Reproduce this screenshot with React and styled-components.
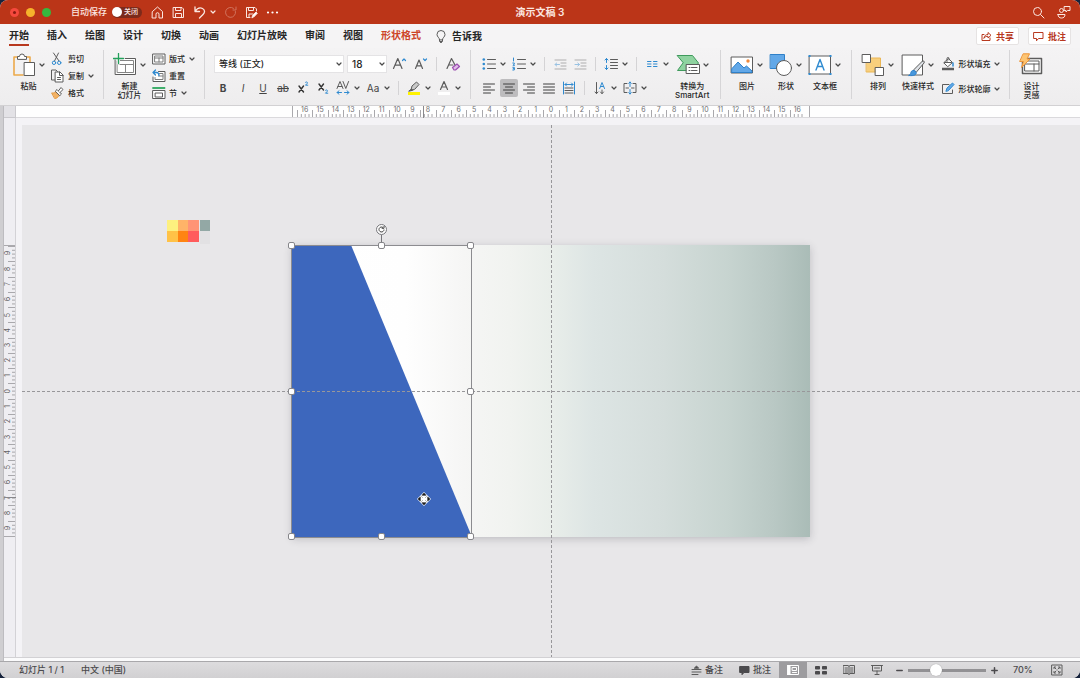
import { useState } from 'react';
import styled, { createGlobalStyle, css } from 'styled-components';

const colors = {
  brand: '#bb3518',
  ink: '#262626',
  line: '#5c5c5c',
  blue: '#2f8ad0',
  paleBlue: '#62a8e8',
  canvas: '#e8e7e9',
  shape: '#3d67bd',
};

const GlobalStyle = createGlobalStyle`
  * { box-sizing: border-box; }
  html, body, #root { height: 100%; }
  body {
    margin: 0;
    background: #17233c;
    font-family: Inter, 'Noto Sans CJK SC', sans-serif;
    color: ${colors.ink};
    overflow: hidden;
  }
  button, select { font: inherit; color: inherit; }
`;

const Window = styled.div`
  height: 100%;
  display: flex;
  flex-direction: column;
  overflow: hidden;
  border-radius: 8px;
  background: #f3f2f3;
`;

const plainButton = css`
  border: 0;
  padding: 0;
  margin: 0;
  background: none;
  cursor: default;
`;

/* ---------- title bar ---------- */

const TitleBar = styled.header`
  flex: none;
  height: 24px;
  display: grid;
  grid-template-columns: 1fr auto 1fr;
  align-items: center;
  background: ${colors.brand};
  color: #fbe6e0;
`;

const TitleLeft = styled.div`
  display: flex;
  align-items: center;
  padding-left: 10px;
`;

const Lights = styled.div`
  display: flex;
  gap: 7px;
  margin-right: 20px;
`;

const Light = styled.button`
  ${plainButton}
  width: 9px;
  height: 9px;
  border-radius: 50%;
  background: ${props => props.$color};
  display: grid;
  place-items: center;

  &::after {
    content: '';
    width: 3px;
    height: 3px;
    border-radius: 50%;
    background: ${props => props.$dot || 'transparent'};
  }
`;

const AutoSave = styled.label`
  display: flex;
  align-items: center;
  gap: 5px;
  font-size: 9px;
  line-height: 12px;
  font-weight: 500;
  white-space: nowrap;
`;

const HiddenCheck = styled.input`
  position: absolute;
  opacity: 0;
  width: 1px;
  height: 1px;
`;

const Switch = styled.span`
  display: flex;
  align-items: center;
  gap: 2px;
  width: 30px;
  height: 11px;
  border-radius: 6px;
  background: #7d2a1b;
  font-size: 7px;
  line-height: 10px;

  &::before {
    content: '';
    width: 10px;
    height: 10px;
    border-radius: 50%;
    background: #fff;
  }
`;

const QuickBar = styled.div`
  display: flex;
  align-items: center;
  gap: 7px;
  margin-left: 8px;
`;

const QuickButton = styled.button`
  ${plainButton}
  width: ${props => (props.$narrow ? '8px' : '14px')};
  margin: ${props => (props.$narrow ? '0 -1px 0 -4px' : '0')};
  height: 16px;
  display: grid;
  place-items: center;
  opacity: ${props => (props.disabled ? 0.35 : 1)};
`;

const DocTitle = styled.h1`
  margin: 0;
  font-size: 10px;
  line-height: 14px;
  font-weight: 600;
`;

const TitleRight = styled.div`
  display: flex;
  justify-content: flex-end;
  gap: 12px;
  padding-right: 9px;
`;

/* ---------- tabs ---------- */

const TabRow = styled.nav`
  flex: none;
  height: 24px;
  display: flex;
  align-items: center;
  padding: 0 9px;
  background: #f5f4f5;
`;

const Tabs = styled.div`
  display: flex;
  gap: 18px;
`;

const Tab = styled.button`
  ${plainButton}
  height: 20px;
  font-size: 10px;
  line-height: 16px;
  font-weight: 600;
  white-space: nowrap;
  color: ${props => (props.$accent ? '#cd4528' : colors.ink)};
  border-bottom: 2px solid ${props => (props.$active ? '#b8391f' : 'transparent')};
`;

const TellMe = styled.button`
  ${plainButton}
  display: flex;
  align-items: center;
  gap: 6px;
  margin-left: 15px;
  font-size: 10px;
  line-height: 16px;
  font-weight: 600;
`;

const TabActions = styled.div`
  display: flex;
  gap: 9px;
  margin-left: auto;
`;

const ActionButton = styled.button`
  ${plainButton}
  display: flex;
  align-items: center;
  justify-content: center;
  gap: 4px;
  width: 43px;
  height: 18px;
  border: 1px solid #e6e3e3;
  border-radius: 2px;
  background: #fff;
  color: #b8391f;
  font-size: 9px;
  font-weight: 600;
  white-space: nowrap;
`;

/* ---------- ribbon ---------- */

const Ribbon = styled.div`
  flex: none;
  height: 58px;
  display: flex;
  padding: 2px 3px 0;
  background: linear-gradient(#f4f3f4, #eeedee);
  border-bottom: 1px solid #d2d1d3;
`;

const Group = styled.div`
  position: relative;
  flex: none;
  display: flex;
  align-items: flex-start;
  gap: ${props => props.$gap || 6}px;
  height: 49px;
  padding: 0 ${props => props.$end || 9}px 0 9px;
  border-right: 1px solid ${props => (props.$last ? 'transparent' : '#d6d5d7')};
`;

const BigButton = styled.button`
  ${plainButton}
  min-width: ${props => (props.$plain ? '24px' : '33px')};
  padding-top: 3px;
  display: flex;
  flex-direction: column;
  align-items: center;
  gap: 5px;
  font-size: 8px;
  line-height: 9px;
  font-weight: 500;
  white-space: pre;
  text-align: center;
`;

const BigIcon = styled.span`
  display: flex;
  align-items: center;
  gap: 3px;
  height: 24px;
`;

const SmallColumn = styled.div`
  display: flex;
  flex-direction: column;
`;

const SmallButton = styled.button`
  ${plainButton}
  height: 17px;
  display: flex;
  align-items: center;
  font-size: 8px;
  line-height: 12px;
  font-weight: 500;
  white-space: nowrap;
`;

const SmallLabel = styled.span`
  margin: 0 4px 0 3px;
  text-align: left;
`;

const ToolStack = styled.div`
  display: flex;
  flex-direction: column;
  gap: ${props => (props.$loose ? '8px' : '6px')};
  padding-top: 5px;
`;

const ToolRow = styled.div`
  display: flex;
  align-items: center;
  gap: ${props => props.$gap || 2}px;
  height: 18px;
`;

const ToolButton = styled.button`
  ${plainButton}
  width: 18px;
  height: 18px;
  display: grid;
  place-items: center;
  border-radius: 2px;
  font-size: 10px;
  line-height: 14px;
  background: ${props => (props.$active ? '#bdbcbe' : 'transparent')};
  opacity: ${props => (props.disabled ? 0.45 : 1)};
  color: #444;
`;

const SplitButton = styled.button`
  ${plainButton}
  width: 28px;
  height: 18px;
  display: grid;
  grid-template-columns: 18px 10px;
  place-items: center;
  font-size: 10px;
  line-height: 14px;
  color: #444;
`;

const Separator = styled.span`
  width: 9px;
  height: 14px;
  background: linear-gradient(#d4d3d5, #d4d3d5) center / 1px 100% no-repeat;
`;

const SelectBox = styled.div`
  display: grid;
  grid-template-columns: 1fr 10px;
  align-items: center;
  width: ${props => (props.$wide ? '130px' : '40px')};
  height: 18px;
  background: #fff;
  border: 1px solid #e4e3e5;

  & > select {
    grid-area: 1 / 1 / 2 / 3;
    appearance: none;
    border: 0;
    outline: 0;
    background: transparent;
    padding: 0 4px;
    font-size: ${props => (props.$wide ? '9px' : '10px')};
    line-height: 14px;
    font-weight: 500;
  }

  & > svg {
    grid-area: 1 / 2 / 2 / 3;
    justify-self: end;
    margin-right: 1px;
    pointer-events: none;
  }
`;

/* ---------- work area ---------- */

const Workspace = styled.main`
  flex: 1;
  min-height: 0;
  display: grid;
  grid-template-columns: 4px 12px 6px 1fr;
  grid-template-rows: 12px 7px 1fr 4px;
  background: #f4f3f6;
`;

const EdgeStrip = styled.div`
  grid-area: 1 / 1 / 5 / 2;
  background: #cfced1;
  border-right: 1px solid #bdbcc0;
`;

const RulerCorner = styled.div`
  grid-area: 1 / 2 / 2 / 3;
  background: #e3e2e6;
  border: solid #cac9cd;
  border-width: 0 1px 1px 0;
`;

const RulerTop = styled.div`
  grid-area: 1 / 3 / 2 / 5;
  display: flex;
  justify-content: center;
  padding-left: 6px;
  background: #fefefe;
  border-bottom: 1px solid #dad9dc;
`;

const RulerLeft = styled.div`
  grid-area: 2 / 2 / 4 / 3;
  display: flex;
  flex-direction: column;
  justify-content: center;
  padding-top: 7px;
  background: #efeef2;
  border-right: 1px solid #d3d2d6;
`;

const TopScale = styled.div`
  position: relative;
  display: grid;
  grid-template-columns: repeat(33, 1fr);
  width: 518px;
  padding: 0 4px;
  border: solid #aaa9ad;
  border-width: 0 1px;
`;

const LeftScale = styled.div`
  position: relative;
  display: grid;
  grid-template-rows: repeat(19, 1fr);
  height: 292px;
  border: solid #aaa9ad;
  border-width: 1px 0;
`;

const TopCell = styled.span`
  display: flex;
  flex-direction: column;
  align-items: center;
  font-size: 7px;
  line-height: 7px;
  color: #6f6e72;

  & > svg {
    width: 100%;
    height: 7px;
    margin-top: -3px;
  }
`;

const LeftCell = styled.span`
  display: flex;
  align-items: center;
  justify-content: space-between;
  font-size: 7px;
  line-height: 7px;
  color: #5f5e62;
  min-height: 0;

  & > span {
    writing-mode: vertical-rl;
    transform: rotate(180deg);
  }

  & > svg {
    width: 7px;
    height: 100%;
    margin-left: -3px;
  }
`;

const TopMarker = styled.i`
  position: absolute;
  left: 130px;
  top: 0;
  width: 1px;
  height: 12px;
  background: #88878b;
`;

const LeftMarker = styled.i`
  position: absolute;
  top: 251px;
  left: 0;
  width: 12px;
  height: 1px;
  background: #88878b;
`;

const Canvas = styled.section`
  grid-area: 3 / 4 / 4 / 5;
  position: relative;
  display: grid;
  place-items: center;
  overflow: hidden;
  background: ${colors.canvas};
`;

const CanvasFoot = styled.div`
  grid-area: 4 / 2 / 5 / 5;
  background: #fbfbfc;
  border-top: 1px solid #d2d1d4;
`;

const Slide = styled.div`
  position: relative;
  width: 518px;
  height: 292px;
  box-shadow: 0 2px 8px rgba(60, 60, 70, 0.24);
  background: linear-gradient(
    90deg,
    #fff 0%,
    #fefefe 22%,
    #f6f6f5 33%,
    #f1f3f0 42%,
    #e9eeea 50%,
    #dde5e4 58%,
    #d4dddb 72%,
    #c7d4d0 84%,
    #b9c8c4 93%,
    #aabcb7 100%
  );
`;

const GuideH = styled.i`
  position: absolute;
  left: 0;
  right: 0;
  top: 50%;
  height: 1px;
  background: repeating-linear-gradient(90deg, #98979a 0 3px, transparent 3px 5px);
`;

const GuideV = styled.i`
  position: absolute;
  top: 0;
  bottom: 0;
  left: 50%;
  width: 1px;
  background: repeating-linear-gradient(180deg, #98979a 0 3px, transparent 3px 5px);
`;

const ShapeLayer = styled.svg`
  display: block;
  position: absolute;
  left: 0;
  top: 0;
`;

const Selection = styled.div`
  position: absolute;
  left: calc(50% - 260px);
  top: calc(50% - 146px);
  width: 181px;
  height: 293px;
  border: 1px solid #8c8c90;
`;

const Handle = styled.i`
  position: absolute;
  left: ${props => props.$x}%;
  top: ${props => props.$y}%;
  width: 7px;
  height: 7px;
  margin: -4px;
  border: 1px solid #86868a;
  border-radius: 2px;
  background: #fff;
`;

const RotateHandle = styled.div`
  position: absolute;
  left: 50%;
  top: -22px;
  width: 11px;
  height: 22px;
  margin-left: -6px;
`;

const Pointer = styled.svg`
  position: absolute;
  left: calc(50% - 134px);
  top: calc(50% + 101px);
`;

const Palette = styled.div`
  position: absolute;
  left: calc(50% - 384px);
  top: calc(50% - 171px);
  display: flex;
  gap: 1px;
`;

const Warm = styled.div`
  display: grid;
  grid-template-columns: 11px 10px 11px;
  grid-auto-rows: 11px;
`;

const Cool = styled.div`
  display: grid;
  grid-template-columns: 10px;
  grid-template-rows: 11px 13px;
`;

const Swatch = styled.span`
  background: ${props => props.$color};
`;

/* ---------- status bar ---------- */

const StatusBar = styled.footer`
  flex: none;
  height: 17px;
  display: flex;
  align-items: center;
  padding: 0 17px 0 19px;
  background: linear-gradient(#dddcde, #d1d0d2);
  border-top: 1px solid #a9a8ab;
  color: #4b4a4d;
  font-size: 9px;
  line-height: 14px;
  font-weight: 500;
  white-space: nowrap;
`;

const StatusLeft = styled.div`
  display: flex;
  gap: 17px;
`;

const StatusRight = styled.div`
  display: flex;
  align-items: center;
  margin-left: auto;
`;

const StatusButton = styled.button`
  ${plainButton}
  display: flex;
  align-items: center;
  gap: 3px;
  margin-right: ${props => (props.$last ? '8px' : '16px')};
`;

const ViewButton = styled.button`
  ${plainButton}
  width: 28px;
  height: 16px;
  display: grid;
  place-items: center;
  background: ${props => (props.$active ? '#9d9c9f' : 'transparent')};
`;

const ZoomControl = styled.div`
  display: flex;
  align-items: center;
  gap: 5px;
  margin-left: 5px;
`;

const ZoomRange = styled.input`
  appearance: none;
  width: 78px;
  height: 12px;
  margin: 0;
  background: linear-gradient(#929194, #929194) center / 100% 3px no-repeat;

  &::-webkit-slider-thumb {
    appearance: none;
    width: 12px;
    height: 12px;
    border-radius: 50%;
    background: #fff;
    box-shadow: 0 0 1px rgba(0, 0, 0, 0.4);
  }
`;

const ZoomValue = styled.output`
  width: 38px;
  margin-left: 15px;
`;

/* ---------- icons ---------- */

const Icon = ({ w = 14, h = w, children, stroke = colors.line, sw = 1 }) => (
  <svg
    width={w}
    height={h}
    viewBox={`0 0 ${w} ${h}`}
    fill="none"
    stroke={stroke}
    strokeWidth={sw}
    strokeLinecap="round"
    strokeLinejoin="round"
    aria-hidden="true"
  >
    {children}
  </svg>
);

const Chevron = ({ color = '#4a4a4a' }) => (
  <Icon w={6} stroke={color} sw={1.2}><path d="M1 2l2 2 2-2" /></Icon>
);

const HomeIcon = () => (
  <Icon w={13} stroke="#fbe6e0">
    <path d="M1.500 5.500L6.500 1l5 4.500V12H8V8.200a1.500 1.500 0 0 0-3 0V12H1.500z" />
  </Icon>
);

const SaveIcon = ({ edit }) => (
  <Icon w={13} stroke="#fbe6e0">
    {edit
      ? <>
        <path d="M5 11.500H1.500v-10H10l1.500 1.500v2M3.500 1.500v3h5v-3M4 11.500V8h4" />
        <path d="M7 11.500l.6-2L11 6l1.300 1.300L8.900 10.800z" fill="#fff" />
      </>
      : <path d="M1.500 1.500h8.500l1.500 1.500v8.500h-10zM3.500 1.500v3h5.500v-3M3.500 11.500V7.500h6v4" />}
  </Icon>
);

const UndoIcon = () => (
  <Icon w={13} stroke="#fbe6e0" sw={1.3}>
    <path d="M2 1v4.500h4.500M2 5.500C4 2.500 7 1.200 9.500 2.500c2.700 1.500 2.500 4 .5 6L6.500 12" />
  </Icon>
);

const RedoIcon = () => (
  <Icon w={13} stroke="#fbe6e0">
    <path d="M11.500 5.500a5 5 0 1 1-2-3.200M12 1v3H9" />
  </Icon>
);

const DotsIcon = () => (
  <Icon w={13} stroke="none">
    {[2, 6.5, 11].map(x => <circle key={x} cx={x} cy="6.500" r="1.100" fill="#fff" />)}
  </Icon>
);

const SearchIcon = () => (
  <Icon w={13} stroke="#fbe6e0"><circle cx="5.500" cy="5.500" r="4" /><path d="M8.500 8.500l3.500 3.500" /></Icon>
);

const PresenceIcon = () => (
  <Icon w={14} stroke="#fbe6e0">
    <circle cx="4.500" cy="5.500" r="2" />
    <path d="M1 9.500h7c0 2.500-1.500 3.500-3.500 3.500S1 12 1 9.500zM7.500 1.500H13v4h-2.500L9 7V5.500H7.500z" />
  </Icon>
);

const BulbIcon = () => (
  <Icon w={10} h={13}>
    <path d="M3.500 9.500C3.500 7.500 1 7 1 4.500a4 4 0 0 1 8 0c0 2.500-2.500 3-2.500 5zM3.500 9.500v2h3v-2M4.500 12.500h1" />
  </Icon>
);

const ShareIcon = () => (
  <Icon w={11} stroke="#b8391f">
    <path d="M3 3.500H1v6h8V7M3 7c.3-2.500 2-3.500 4-3.500V1.500L10 4.300 7 7V5.300C5.500 5.300 4 5.500 3 7z" />
  </Icon>
);

const CommentIcon = () => (
  <Icon w={11} stroke="#b8391f"><path d="M1 1.500h9v6H5.500L3.500 9.800V7.500H1z" /></Icon>
);

const PasteIcon = () => (
  <Icon w={24}>
    <path d="M6 4H2v18h9M14 4h4v5" stroke="#eca94a" strokeWidth="1.600" />
    <path d="M5.500 6V3.500h2a2.500 2.500 0 0 1 5 0h2V6z" fill="#fff" />
    <path d="M12.500 9.500h10v13h-10z" fill="#fff" />
  </Icon>
);

const CutIcon = () => (
  <Icon w={14}>
    <path d="M2.500 1l5.500 8M7.500 1L3.500 9" />
    <circle cx="3" cy="10.800" r="1.700" stroke={colors.blue} />
    <circle cx="8.200" cy="10.800" r="1.700" stroke={colors.blue} />
  </Icon>
);

const CopyIcon = () => (
  <Icon w={14}>
    <path d="M4 11H.5V1H5l1.500 1.500" />
    <path d="M4.500 3h4.500l3 3v7H4.500z" fill="#fff" />
    <path d="M8.500 3v3.500H12M6.500 8.500h3M6.500 10.500h3" />
  </Icon>
);

const BrushIcon = () => (
  <Icon w={14}>
    <path d="M1 7c2 .3 3-.5 4-1.500l3.500 3.500C7 11.500 5.500 12.500 4 12.500z" fill="#f3b265" stroke="#e39a45" />
    <path d="M4.500 5l1.500-1.500 4.500 4.500L9 9.500z" fill="#fff" />
    <path d="M7.500 4.800L10 1.500l2 2L9 6.500" fill="#fff" />
  </Icon>
);

const NewSlideIcon = () => (
  <Icon w={24}>
    <path d="M2.500 5.500h20v16h-20z" fill="#fff" />
    <path d="M4.500 7.500h16v12h-16zM4.500 11.500h16M12.500 11.500v8" stroke="#858585" />
    <path d="M5.500 .5v10M.5 5h10" stroke="#f3f2f3" strokeWidth="3" />
    <path d="M5.500 .5v10M.5 5.500h10" stroke="#22a05a" strokeWidth="1.300" />
  </Icon>
);

const LayoutIcon = () => (
  <Icon w={14}>
    <path d="M1 2h12v10H1z" fill="#fff" />
    <path d="M3 4h8v6H3zM3 6h8M7 6v4" stroke="#7c7c7c" />
  </Icon>
);

const ResetIcon = () => (
  <Icon w={14}>
    <path d="M6.500 2.500h6.500v10H1V8" fill="#fff" />
    <path d="M7.500 4.500h3.500v6H3V8.500M6.500 7H11" stroke="#7c7c7c" />
    <path d="M3.500 1L1 3.500 3.500 6M1 3.500h3.500c2 0 2.500 1.500 2.500 3" stroke={colors.blue} strokeWidth="1.300" />
  </Icon>
);

const SectionIcon = () => (
  <Icon w={14}>
    <path d="M1 1.500h12v1H1z" stroke="#3fae6c" />
    <path d="M1 4.500h12v8H1z" fill="#fff" />
    <path d="M3.500 7h7v4h-7z" />
  </Icon>
);

const GrowIcon = ({ shrink }) => (
  <Icon w={16} sw={1.2}>
    {shrink
      ? <path d="M3.500 12.500L7 4l3.500 8.500M4.800 9.800h4.400" />
      : <path d="M2.500 12.500l4.300-10 4.200 10M4 9.200h5.500" />}
    <path d={shrink ? 'M11.500 3L13 4.500 14.500 3' : 'M11.500 4.500L13 3l1.500 1.500'} stroke={colors.blue} />
  </Icon>
);

const ClearFormatIcon = () => (
  <Icon w={16} sw={1.2}>
    <path d="M2 12.500L6.500 2.500 10 9M3.700 9H8" />
    <path d="M7.500 11.500L12 8l2.500 2.500L10.500 14H9z" fill="#e2bdea" stroke="#9b4fb0" />
  </Icon>
);

const ScriptIcon = ({ up }) => (
  <Icon w={16}>
    <path d={up ? 'M4 6l4.500 6M8.500 6L4 12' : 'M4 4l4.500 6M8.500 4L4 10'} stroke="#333" strokeWidth="1.400" />
    <path
      d={up ? 'M10.500 2.300c1-1 2.500 0 1.800 1L10.500 5.200h2.300' : 'M10.500 10.300c1-1 2.500 0 1.800 1l-1.800 1.900h2.300'}
      stroke={colors.blue}
    />
  </Icon>
);

const SpacingIcon = () => (
  <Icon w={16}>
    <path d="M2 8.500L5 1.500 8 8.500M3 6.500h4M8 1.500l2.800 7 2.800-7" />
    <path d="M2 12.500h4.500M4 10.800l-2 1.700 2 1.700M14 12.500H9.500M12 10.800l2 1.700-2 1.700" stroke={colors.blue} />
  </Icon>
);

const HighlightIcon = () => (
  <Icon w={16}>
    <path d="M2 13.500h12" stroke="#fff200" strokeWidth="3" strokeLinecap="butt" />
    <path d="M5 10l1-4 4.500-4 2.500 2.500-4 4.500z" fill="#c9c9c9" />
    <path d="M3 11l2.500-2 1 1z" fill="#555" />
  </Icon>
);

const FontColorIcon = () => (
  <Icon w={16} sw={1.2}>
    <path d="M4.500 9.500L8 1.500l3.500 8M5.700 7h4.600" />
    <path d="M2 13.500h12" stroke="#fff" strokeWidth="3" strokeLinecap="butt" />
  </Icon>
);

const ListIcon = ({ numbered }) => (
  <Icon w={14}>
    <path d="M5.500 2.500h8M5.500 7h8M5.500 11.500h8" />
    {numbered
      ? <path d="M1.500 1v3M.8 6h1.500v1L1 8.300h1.500M.8 10.300h1.500v2.700H.8M1.200 11.600h1" stroke={colors.blue} />
      : [2.5, 7, 11.5].map(y => <circle key={y} cx="1.800" cy={y} r="1.300" fill={colors.blue} stroke="none" />)}
  </Icon>
);

const IndentIcon = ({ out }) => (
  <Icon w={13}>
    <path d="M1 2h11M7 5h5M7 8h5M1 11h11" />
    <path d={out ? 'M1 6.500h4.500M2.700 5L1 6.500 2.700 8' : 'M1 6.500h4.500M3.800 5l1.700 1.500L3.800 8'} stroke={colors.blue} />
  </Icon>
);

const LineSpaceIcon = () => (
  <Icon w={14}>
    <path d="M6.500 2.500h7M6.500 5.500h7M6.500 8.500h7M6.500 11.500h7" />
    <path d="M2.500 1.500v4M1 3l1.500-1.500L4 3M2.500 12.500v-4M1 11l1.500 1.500L4 11" stroke={colors.blue} />
  </Icon>
);

const ColumnsIcon = () => (
  <Icon w={12}><path d="M1.500 3.500h3.500M1.500 6h3.500M1.500 8.500h3.500M7.500 3.500H11M7.500 6H11M7.500 8.500H11" stroke={colors.blue} /></Icon>
);

const alignPaths = {
  left: 'M1.500 2h11M1.500 5h7M1.500 8h11M1.500 11h7',
  center: 'M1.500 2h11M3.500 5h7M1.500 8h11M3.500 11h7',
  right: 'M1.500 2h11M5.500 5h7M1.500 8h11M5.500 11h7',
  justify: 'M1.500 2h11M1.500 5h11M1.500 8h11M1.500 11h11',
};

const AlignIcon = ({ kind }) => <Icon w={14} h={13}><path d={alignPaths[kind]} stroke="#3f3f3f" /></Icon>;

const DistributeIcon = () => (
  <Icon w={14}>
    <path d="M1.500 1v12M12.500 1v12M3 3.500h8M4.500 2L3 3.500 4.500 5M9.500 2L11 3.500 9.500 5" stroke={colors.blue} />
    <path d="M3 7h8M3 9.500h8M3 12h8" />
  </Icon>
);

const TextDirectionIcon = () => (
  <Icon w={14}>
    <path d="M3.500 1.500v11M9 9v3.500M7.500 11L9 12.700 10.500 11M2 11l1.500 1.700L5 11" />
    <path d="M6.700 7.500L9 1.500l2.500 6M7.500 5.500h3" stroke={colors.blue} />
  </Icon>
);

const AlignTextIcon = () => (
  <Icon w={14}>
    <path d="M4 2.500H1v9h3M10 2.500h3v9h-3M3 7h2.500M8.500 7H11" />
    <path d="M7 1v4.500M5.700 2.300L7 1l1.300 1.300M7 13V8.500M5.700 11.700L7 13l1.300-1.300" stroke={colors.blue} />
  </Icon>
);

const SmartArtIcon = () => (
  <Icon w={24}>
    <path d="M1.500 2.500h15l6 7.500-6 7.500h-15L7 10z" fill="#8fd3a0" stroke="#3f9a5c" />
    <path d="M10.500 11.500h13v9h-13z" fill="#fff" />
    <path d="M13 14.500h1M15.500 14.500h5.500M13 17.500h1M15.500 17.500h5.500" />
  </Icon>
);

const PictureIcon = () => (
  <Icon w={24}>
    <path d="M1.500 4h21v16h-21z" fill="#fff" />
    <path d="M2 15.500l6-6.500 6 6 2.500-2 5.500 5v1.500H2z" fill={colors.paleBlue} stroke="#2f80c8" />
    <circle cx="18" cy="8" r="1.700" fill="#f08a3c" stroke="none" />
  </Icon>
);

const ShapesIcon = () => (
  <Icon w={24}>
    <path d="M1.500 1.500h14v14h-14z" fill={colors.paleBlue} stroke="#2f80c8" />
    <circle cx="15" cy="15" r="7.500" fill="#fff" />
  </Icon>
);

const TextBoxIcon = () => (
  <Icon w={24}>
    <path d="M1.500 3h21v18h-21z" fill="#fff" />
    <path d="M8 17l4-10.500L16 17M9.500 13.500h5" stroke={colors.blue} strokeWidth="1.400" />
    {[[1.5, 3], [22.5, 3], [1.5, 21], [22.5, 21]].map(([x, y]) => (
      <rect key={`${x}-${y}`} x={x - 1} y={y - 1} width="2" height="2" fill={colors.blue} stroke="none" />
    ))}
  </Icon>
);

const ArrangeIcon = () => (
  <Icon w={24}>
    <path d="M5.500 5h14v14h-14z" fill="#f8cf7c" stroke="#eab655" />
    <path d="M1.500 1.500h8v8h-8zM14.500 14.500h8v8h-8z" fill="#fff" />
  </Icon>
);

const QuickStyleIcon = () => (
  <Icon w={24}>
    <path d="M1.500 2h20v20h-20z" fill="#fff" />
    <path d="M12.500 17l8.500-8.500c1.500-1.300 3 0 2 1.500L15.500 19z" fill="#dfe3e8" />
    <path d="M8 22.500c2-.8 1.500-3 2.500-4.300 1.200-1.500 4-.8 4.700 1.300.5 2-2 3.700-7.200 3z" fill="#4797dd" stroke="#2f80c8" />
  </Icon>
);

const FillIcon = () => (
  <Icon w={14}>
    <path d="M1 12h12" strokeWidth="2.500" strokeLinecap="butt" />
    <path d="M3 5.500l4.500-4 4 4-4.500 4z" fill="#fff" />
    <path d="M6 4.500V1.500a1 1 0 0 1 2 0V3M3.500 5.500h7" />
    <path d="M12 6v3" stroke={colors.blue} strokeWidth="1.500" />
  </Icon>
);

const OutlineIcon = () => (
  <Icon w={14}>
    <path d="M8 2.500H1.500v9h10V8" />
    <path d="M5 9l1-3L11.500 1 13 2.500 7.500 8.500z" fill={colors.paleBlue} stroke={colors.blue} />
  </Icon>
);

const DesignIcon = () => (
  <Icon w={24}>
    <path d="M3.500 20.500v-15h19v15z" fill="#fff" strokeWidth="1.500" />
    <path d="M6 8h14v10H6zM6 11h14M15 11v7" />
    <path d="M4.500 .8h6L8 6h3L2.500 14.500 4.500 8.500H1z" fill="#fcc472" stroke="#ee9436" />
  </Icon>
);

const NotesIcon = () => (
  <Icon w={11}><path d="M1 4.500h9M1 7h9M1 9.500h6" /><path d="M3.500 3L5.500 1l2 2z" fill="#4b4a4d" /></Icon>
);

const CommentSolidIcon = () => (
  <Icon w={11}><path d="M1 1.500h9v6H5L3 9.700V7.500H1z" fill="#4b4a4d" stroke="#4b4a4d" /></Icon>
);

const NormalViewIcon = () => (
  <Icon w={12} stroke="#fff">
    <path d="M.5 1.500h11v9H.5z" /><path d="M1 1.500h2v9H1z" fill="#fff" /><path d="M5.500 3.500h4v3h-4zM5.500 8.500h4" />
  </Icon>
);

const GridViewIcon = () => (
  <Icon w={12} stroke="none">
    {[[0, 2], [7, 2], [0, 7], [7, 7]].map(([x, y]) => (
      <rect key={`${x}-${y}`} x={x} y={y} width="5" height="3.500" rx=".8" fill="#4b4a4d" />
    ))}
  </Icon>
);

const ReadingIcon = () => (
  <Icon w={12}>
    <path d="M.5 1.500h4.500l1 .8 1-.8h4.500v8H7l-1 1-1-1H.5zM6 2.500v8M2 4h2.500M2 6h2.500M2 8h2.500M7.500 4H10M7.500 6H10M7.500 8H10" />
  </Icon>
);

const ShowIcon = () => (
  <Icon w={12}><path d="M.5 1.500h11M1.500 1.500v5.500h9V1.500M3.500 4h5M6 7v3M4 10.500h4" /></Icon>
);

const FitIcon = () => (
  <Icon w={12}>
    <path d="M1 1h10v10H1zM3 4.500V3h1.500M7.500 3H9v1.500M9 7.500V9H7.500M4.500 9H3V7.500M3.500 3.500l1.500 1.500M8.500 3.500L7 5M3.500 8.500L5 7M8.500 8.500L7 7" />
  </Icon>
);

const ZoomSign = ({ plus }) => (
  <Icon w={7} stroke="#4b4a4d" sw={1.5}><path d={plus ? 'M.8 3.500h5.400M3.500 .8v5.400' : 'M.8 3.500h5.400'} /></Icon>
);

/* ---------- parts ---------- */

const Big = ({ icon, label, plain }) => (
  <BigButton $plain={plain}>
    <BigIcon>{icon}{!plain && <Chevron />}</BigIcon>
    {label}
  </BigButton>
);

const Small = ({ icon, label, menu }) => (
  <SmallButton>
    {icon}
    <SmallLabel>{label}</SmallLabel>
    {menu && <Chevron />}
  </SmallButton>
);

const Tool = ({ label, children, ...rest }) => (
  <ToolButton aria-label={label} {...rest}>{children}</ToolButton>
);

const Split = ({ label, children }) => (
  <SplitButton aria-label={label}>{children}<Chevron /></SplitButton>
);

const TopTicks = () => (
  <svg viewBox="0 0 16 7" preserveAspectRatio="none" stroke="#a5a4a8" aria-hidden="true">
    <path d="M.5 0v7M4.500 4v3M8.500 4v3M12.500 4v3" />
  </svg>
);

const LeftTicks = () => (
  <svg viewBox="0 0 7 16" preserveAspectRatio="none" stroke="#a5a4a8" aria-hidden="true">
    <path d="M0 .5h7M4 4.500h3M4 8.500h3M4 12.500h3" />
  </svg>
);

const tabs = ['开始', '插入', '绘图', '设计', '切换', '动画', '幻灯片放映', '审阅', '视图', '形状格式'];
const topMarks = Array.from({ length: 33 }, (_, i) => Math.abs(i - 16));
const leftMarks = Array.from({ length: 19 }, (_, i) => Math.abs(i - 9));
const warmSwatches = ['#fdf07f', '#ffb368', '#ff9475', '#ffc247', '#ff8412', '#ff5c5c'];
const handles = [[0, 0], [50, 0], [100, 0], [0, 50], [100, 50], [0, 100], [50, 100], [100, 100]];

const App = () => {
  const [activeTab, setActiveTab] = useState('开始');
  const [autoSave, setAutoSave] = useState(false);
  const [align, setAlign] = useState('center');
  const [zoom, setZoom] = useState(33);

  return (
    <>
      <GlobalStyle />
      <Window>
        <TitleBar>
          <TitleLeft>
            <Lights>
              <Light $color="#f5493d" $dot="#8c1a10" aria-label="关闭窗口" />
              <Light $color="#f6b32c" aria-label="最小化" />
              <Light $color="#35b93f" aria-label="全屏" />
            </Lights>
            <AutoSave>
              自动保存
              <HiddenCheck type="checkbox" checked={autoSave} onChange={e => setAutoSave(e.target.checked)} />
              <Switch>关闭</Switch>
            </AutoSave>
            <QuickBar>
              <QuickButton aria-label="主页"><HomeIcon /></QuickButton>
              <QuickButton aria-label="保存"><SaveIcon /></QuickButton>
              <QuickButton aria-label="撤消"><UndoIcon /></QuickButton>
              <QuickButton $narrow aria-label="撤消列表"><Chevron color="#fbe6e0" /></QuickButton>
              <QuickButton disabled aria-label="重复"><RedoIcon /></QuickButton>
              <QuickButton aria-label="另存为"><SaveIcon edit /></QuickButton>
              <QuickButton aria-label="更多"><DotsIcon /></QuickButton>
            </QuickBar>
          </TitleLeft>
          <DocTitle>演示文稿 3</DocTitle>
          <TitleRight>
            <QuickButton aria-label="搜索"><SearchIcon /></QuickButton>
            <QuickButton aria-label="反馈"><PresenceIcon /></QuickButton>
          </TitleRight>
        </TitleBar>

        <TabRow>
          <Tabs role="tablist">
            {tabs.map(tab => (
              <Tab
                key={tab}
                role="tab"
                aria-selected={tab === activeTab}
                $active={tab === activeTab}
                $accent={tab === '形状格式'}
                onClick={() => setActiveTab(tab)}
              >
                {tab}
              </Tab>
            ))}
          </Tabs>
          <TellMe><BulbIcon />告诉我</TellMe>
          <TabActions>
            <ActionButton><ShareIcon />共享</ActionButton>
            <ActionButton><CommentIcon />批注</ActionButton>
          </TabActions>
        </TabRow>

        <Ribbon>
          <Group>
            <Big icon={<PasteIcon />} label="粘贴" />
            <SmallColumn>
              <Small icon={<CutIcon />} label="剪切" />
              <Small icon={<CopyIcon />} label="复制" menu />
              <Small icon={<BrushIcon />} label="格式" />
            </SmallColumn>
          </Group>

          <Group>
            <Big icon={<NewSlideIcon />} label={'新建\n幻灯片'} />
            <SmallColumn>
              <Small icon={<LayoutIcon />} label="版式" menu />
              <Small icon={<ResetIcon />} label="重置" />
              <Small icon={<SectionIcon />} label="节" menu />
            </SmallColumn>
          </Group>

          <Group $end={7}>
            <ToolStack>
              <ToolRow $gap={3}>
                <SelectBox $wide>
                  <select aria-label="字体"><option>等线 (正文)</option></select>
                  <Chevron />
                </SelectBox>
                <SelectBox>
                  <select aria-label="字号"><option>18</option></select>
                  <Chevron />
                </SelectBox>
                <Tool label="增大字号"><GrowIcon /></Tool>
                <Tool label="减小字号"><GrowIcon shrink /></Tool>
                <Separator />
                <Tool label="清除格式"><ClearFormatIcon /></Tool>
              </ToolRow>
              <ToolRow>
                <Tool label="加粗"><b>B</b></Tool>
                <Tool label="倾斜"><i>I</i></Tool>
                <Tool label="下划线"><u>U</u></Tool>
                <Tool label="删除线"><s>ab</s></Tool>
                <Tool label="上标"><ScriptIcon up /></Tool>
                <Tool label="下标"><ScriptIcon /></Tool>
                <Split label="字符间距"><SpacingIcon /></Split>
                <Split label="更改大小写"><span>Aa</span></Split>
                <Separator />
                <Split label="突出显示"><HighlightIcon /></Split>
                <Split label="字体颜色"><FontColorIcon /></Split>
              </ToolRow>
            </ToolStack>
          </Group>

          <Group $gap={4} $end={11}>
            <ToolStack>
              <ToolRow>
                <Split label="项目符号"><ListIcon /></Split>
                <Split label="编号"><ListIcon numbered /></Split>
                <Separator />
                <Tool label="减少缩进" disabled><IndentIcon out /></Tool>
                <Tool label="增加缩进" disabled><IndentIcon /></Tool>
                <Separator />
                <Split label="行距"><LineSpaceIcon /></Split>
                <Separator />
                <Split label="分栏"><ColumnsIcon /></Split>
              </ToolRow>
              <ToolRow>
                {Object.keys(alignPaths).map(kind => (
                  <Tool key={kind} label={kind} $active={kind === align} onClick={() => setAlign(kind)}>
                    <AlignIcon kind={kind} />
                  </Tool>
                ))}
                <Tool label="分散对齐"><DistributeIcon /></Tool>
                <Separator />
                <Split label="文字方向"><TextDirectionIcon /></Split>
                <Split label="对齐文本"><AlignTextIcon /></Split>
              </ToolRow>
            </ToolStack>
            <Big icon={<SmartArtIcon />} label={'转换为\nSmartArt'} />
          </Group>

          <Group $end={10}>
            <Big icon={<PictureIcon />} label="图片" />
            <Big icon={<ShapesIcon />} label="形状" />
            <Big icon={<TextBoxIcon />} label="文本框" />
          </Group>

          <Group $gap={7}>
            <Big icon={<ArrangeIcon />} label="排列" />
            <Big icon={<QuickStyleIcon />} label="快速样式" />
            <ToolStack $loose>
              <Small icon={<FillIcon />} label="形状填充" menu />
              <Small icon={<OutlineIcon />} label="形状轮廓" menu />
            </ToolStack>
          </Group>

          <Group $last>
            <Big icon={<DesignIcon />} label={'设计\n灵感'} plain />
          </Group>
        </Ribbon>

        <Workspace>
          <EdgeStrip />
          <RulerCorner />
          <RulerTop>
            <TopScale>
              {topMarks.map((n, i) => <TopCell key={i}>{n}<TopTicks /></TopCell>)}
              <TopMarker />
            </TopScale>
          </RulerTop>
          <RulerLeft>
            <LeftScale>
              {leftMarks.map((n, i) => <LeftCell key={i}><span>{n}</span><LeftTicks /></LeftCell>)}
              <LeftMarker />
            </LeftScale>
          </RulerLeft>
          <Canvas>
            <Palette>
              <Warm>{warmSwatches.map(c => <Swatch key={c} $color={c} />)}</Warm>
              <Cool>
                <Swatch $color="#93a8a5" />
                <Swatch $color="#e2e1e3" />
              </Cool>
            </Palette>
            <Slide>
              <ShapeLayer width="180" height="292" viewBox="0 0 180 292" aria-hidden="true">
                <path d="M0 0h59l121 292H0z" fill={colors.shape} />
              </ShapeLayer>
            </Slide>
            <GuideH />
            <GuideV />
            <Selection>
              <RotateHandle>
                <svg width="11" height="22" viewBox="0 0 11 22" fill="none" stroke="#77777b" aria-hidden="true">
                  <path d="M5.500 11v11" />
                  <circle cx="5.500" cy="5.500" r="5" fill="#fff" />
                  <path d="M8 5.500a2.500 2.500 0 1 1-1-2M8 2v2.300H5.700" stroke="#444" />
                </svg>
              </RotateHandle>
              {handles.map(([x, y]) => <Handle key={`${x}-${y}`} $x={x} $y={y} />)}
            </Selection>
            <Pointer width="14" height="14" viewBox="0 0 14 14" aria-hidden="true">
              <path d="M7 0l7 7-7 7-7-7z" fill="#fff" />
              <path
                d="M7 1l2 2.300H5zM7 13l2-2.300H5zM1 7l2.300-2v4zM13 7l-2.300-2v4zM4.500 4.500l1 1M9.500 4.500l-1 1M4.500 9.500l1-1M9.500 9.500l-1-1"
                fill="#1c1c1c"
                stroke="#1c1c1c"
                strokeWidth=".6"
              />
            </Pointer>
          </Canvas>
          <CanvasFoot />
        </Workspace>

        <StatusBar>
          <StatusLeft>
            <span>幻灯片 1 / 1</span>
            <span>中文 (中国)</span>
          </StatusLeft>
          <StatusRight>
            <StatusButton><NotesIcon />备注</StatusButton>
            <StatusButton $last><CommentSolidIcon />批注</StatusButton>
            <ViewButton $active aria-label="普通视图"><NormalViewIcon /></ViewButton>
            <ViewButton aria-label="幻灯片浏览"><GridViewIcon /></ViewButton>
            <ViewButton aria-label="阅读视图"><ReadingIcon /></ViewButton>
            <ViewButton aria-label="幻灯片放映"><ShowIcon /></ViewButton>
            <ZoomControl>
              <ZoomSign />
              <ZoomRange
                type="range"
                aria-label="缩放"
                min="0"
                max="100"
                value={zoom}
                onChange={e => setZoom(Number(e.target.value))}
              />
              <ZoomSign plus />
            </ZoomControl>
            <ZoomValue>70%</ZoomValue>
            <FitIcon />
          </StatusRight>
        </StatusBar>
      </Window>
    </>
  );
};

export default App;
